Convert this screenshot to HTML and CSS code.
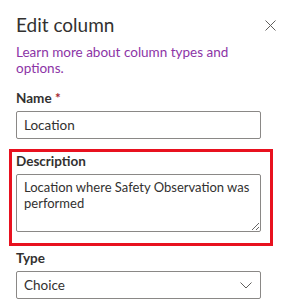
FILE: index.html
```html
<!DOCTYPE html>
<html lang="en">
<head>
    <meta charset="UTF-8">
    <meta name="viewport" content="width=device-width, initial-scale=1.0">
    <title>Edit column</title>
    <link rel="stylesheet" href="styles.css">
</head>
<body>
    <div class="panel">
        <div class="panel-header">
            <h2 class="panel-title">Edit column</h2>
            <button class="close-btn" aria-label="Close">
                <svg width="11" height="11" viewBox="0 0 11 11">
                    <path d="M0.5 0.5 L10.5 10.5 M10.5 0.5 L0.5 10.5" stroke="#605e5c" stroke-width="1" fill="none"/>
                </svg>
            </button>
        </div>

        <a class="learn-link" href="#">Learn more about column types and options.</a>

        <div class="field field-name">
            <label for="name">Name <span class="required">*</span></label>
            <input type="text" id="name" class="text-input" value="Location">
        </div>

        <div class="highlight">
            <div class="field">
                <label for="description">Description</label>
                <textarea id="description" class="text-area">Location where Safety Observation was performed</textarea>
            </div>
        </div>

        <div class="field field-type">
            <label for="type">Type</label>
            <div class="select" id="type">
                <span>Choice</span>
                <svg width="12" height="7" viewBox="0 0 12 7">
                    <path d="M0.5 0.5 L6 6 L11.5 0.5" stroke="#605e5c" stroke-width="1" fill="none"/>
                </svg>
            </div>
        </div>
    </div>
</body>
</html>
```

FILE: styles.css
```css
body {
    margin: 0;
    background-color: #fff;
    font-family: Lato, "Open Sans", sans-serif;
    color: #323130;
}

.panel {
    padding: 13px 20px 0 16px;
}

.panel-header {
    display: flex;
    justify-content: space-between;
    align-items: center;
    height: 24px;
    margin-right: -15px;
}

.panel-title {
    margin: 0;
    font-size: 19px;
    font-weight: normal;
    line-height: 24px;
}

.close-btn {
    border: none;
    background: none;
    padding: 0;
    width: 11px;
    height: 11px;
    display: flex;
}

.learn-link {
    display: block;
    max-width: 225px;
    margin-top: 7px;
    font-size: 13.5px;
    line-height: 16px;
    color: #8c34a6;
    text-decoration: none;
}

.field {
    display: flex;
    flex-direction: column;
}

.field label {
    font-size: 13.5px;
    font-weight: bold;
    line-height: 18px;
    margin-bottom: 4px;
}

.required {
    color: #a4262c;
}

.field-name {
    margin-top: 13px;
}

.text-input,
.text-area,
.select {
    box-sizing: border-box;
    width: 100%;
    border: 1px solid #8a8886;
    border-radius: 2px;
    font-family: inherit;
    font-size: 13.5px;
    color: #323130;
    padding: 0 7px;
}

.text-input {
    height: 28px;
}

.highlight {
    margin: 10px -12px 0 -7px;
    padding: 0 9px 11px 4px;
    border: 3px solid #e8111f;
}

.text-area {
    height: 58px;
    padding: 4px 2px 0 7px;
    font-size: 13px;
    line-height: 16px;
    resize: vertical;
}

.field-type {
    margin-top: 3px;
}

.select {
    height: 28px;
    display: flex;
    align-items: center;
    justify-content: space-between;
    padding-right: 8px;
}
```
